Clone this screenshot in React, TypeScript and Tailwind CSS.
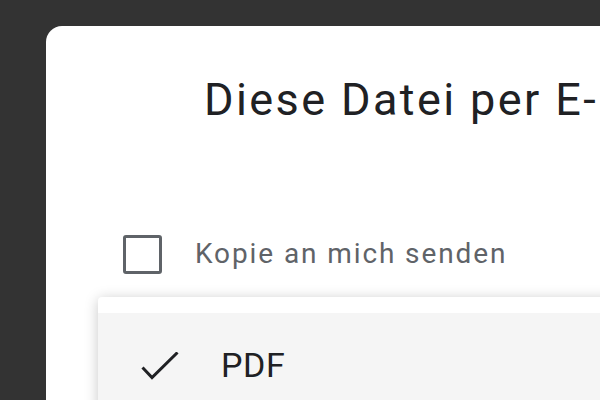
import React from "react";

function CheckIcon() {
  return (
    <svg width="40" height="30" viewBox="0 0 40 30" className="shrink-0">
      <path d="M1.5 15.5 L11 25.5 L36.5 0.5" fill="none" stroke="#202124" strokeWidth="3" />
    </svg>
  );
}

export default function App() {
  return (
    <div className="w-[600px] h-[400px] overflow-hidden bg-[#333333] pt-[26px] pl-[46px] font-['Roboto',sans-serif]">
      <div className="relative h-full bg-white rounded-tl-2xl overflow-hidden">
        <h1 className="pt-[51px] pl-[158px] text-[45px] leading-none font-normal tracking-[2.4px] text-[#202124] whitespace-nowrap">
          Diese Datei per E-Mail senden
        </h1>
        <div className="flex items-center gap-[33px] mt-[112px] pl-[77px] h-[40px]">
          <div className="w-[39px] h-[39px] rounded-[3px] border-[3px] border-[#5f6368]" />
          <span className="text-[28px] leading-none tracking-[1.9px] text-[#5f6368] whitespace-nowrap">Kopie an mich senden</span>
        </div>
        <div className="absolute left-[52px] top-[271px] w-[600px] bg-white pt-[16px] shadow-[0_2px_14px_rgba(0,0,0,0.22)] rounded-sm">
          <div className="flex items-start bg-[#f5f5f5] pt-[35px] pb-[40px] pl-[43px] gap-[40px]">
            <div className="pt-[4px]">
              <CheckIcon />
            </div>
            <span className="text-[34px] leading-none tracking-[0.6px] text-[#202124]">PDF</span>
          </div>
        </div>
      </div>
    </div>
  );
}
